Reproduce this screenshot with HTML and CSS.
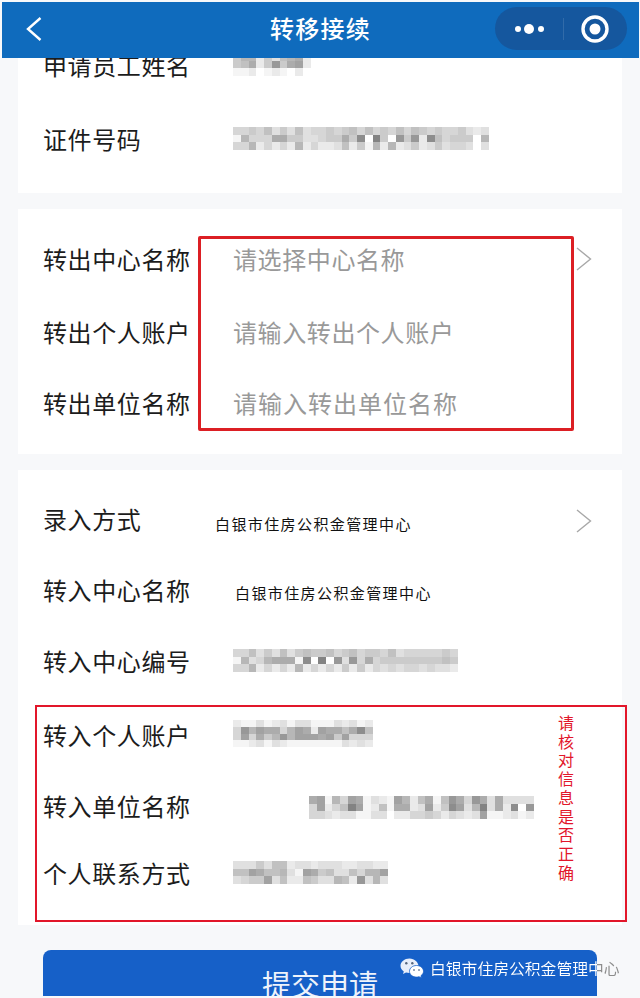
FILE: index.html
```html
<!DOCTYPE html>
<html>
<head>
    <meta charset="utf-8">
    <title>转移接续</title>
    <link rel="stylesheet" href="styles.css">
</head>
<body>
    <div class="page">
        <header class="topbar">
            <svg class="back" width="16" height="24" viewBox="0 0 16 24" fill="none" stroke="#fff" stroke-width="2.4">
                <polyline points="14.5 1 2 12 14.5 23"></polyline>
            </svg>
            <h1>转移接续</h1>
            <div class="capsule">
                <svg width="34" height="12" viewBox="0 0 34 12" fill="#fff">
                    <circle cx="6" cy="6" r="3"></circle>
                    <circle cx="17" cy="6" r="5"></circle>
                    <circle cx="29" cy="6" r="3"></circle>
                </svg>
                <span class="capsule-line"></span>
                <svg width="30" height="30" viewBox="0 0 30 30" fill="none" stroke="#fff" stroke-width="3.4">
                    <circle cx="15" cy="15" r="12"></circle>
                    <circle cx="15" cy="15" r="5.5" fill="#fff" stroke="none"></circle>
                </svg>
            </div>
        </header>

        <main class="content">
            <section class="card card-first">
                <div class="row">
                    <span class="label">申请员工姓名</span>
                    <div class="mosaic mosaic-name" data-rows="a88dac987d|a97da5a76d|eedfedefdf"></div>
                </div>
                <div class="row gap-wide">
                    <span class="label">证件号码</span>
                    <div class="mosaic" data-rows="bbab9cac9cbbaba9b9bab9b9ababbacdc|e8bbb77aaccbaa7a4f3af5a5d49baaaf8|bb8dbdbd8dbddc9dae8d8dcadcacbbcfc"></div>
                </div>
            </section>

            <section class="card card-out">
                <div class="row">
                    <span class="label">转出中心名称</span>
                    <span class="placeholder">请选择中心名称</span>
                    <svg class="chevron" width="16" height="24" viewBox="0 0 16 24" fill="none" stroke="#a8a8a8" stroke-width="1.4">
                        <polyline points="1 1 14.5 12 1 23"></polyline>
                    </svg>
                </div>
                <div class="row gap-small">
                    <span class="label">转出个人账户</span>
                    <span class="placeholder">请输入转出个人账户</span>
                </div>
                <div class="row">
                    <span class="label">转出单位名称</span>
                    <span class="placeholder placeholder-wide">请输入转出单位名称</span>
                </div>
            </section>

            <section class="card card-in">
                <div class="row">
                    <span class="label">录入方式</span>
                    <span class="pasted pasted-first">白银市住房公积金管理中心</span>
                    <svg class="chevron chevron-low" width="16" height="24" viewBox="0 0 16 24" fill="none" stroke="#a8a8a8" stroke-width="1.4">
                        <polyline points="1 1 14.5 12 1 23"></polyline>
                    </svg>
                </div>
                <div class="row">
                    <span class="label">转入中心名称</span>
                    <span class="pasted pasted-second">白银市住房公积金管理中心</span>
                </div>
                <div class="row">
                    <span class="label">转入中心编号</span>
                    <div class="mosaic" data-rows="bb9cac9ca9aa9ba9baab9cbbbbbab|e8cb8777e4f3f5c5b7baaaaaaaa9a|bb8dbdbd8dbdbdadadbcbcbbcbccd"></div>
                </div>
                <div class="row gap-wide">
                    <span class="label">转入个人账户</span>
                    <div class="mosaic mosaic-thin" data-rows="deecedcecceeecdced|b58677b867d6779749|b6b7a85866676a6bbb|eedcecdeeeeeeecdcd"></div>
                </div>
                <div class="row">
                    <span class="label">转入单位名称</span>
                    <div class="mosaic mosaic-unit" data-rows="76e8b67ecde68d97e957b57c7cccc|b6db936ed9e77dc6da46c83c7d4f5|bbcdcceeccfddbbabdbcdc6eedced"></div>
                </div>
                <div class="row gap-narrow">
                    <span class="label">个人联系方式</span>
                    <div class="mosaic" data-rows="cccac99dccdcccddccdd|9967998ce67a9cc9b886|cbaa6c9dd9acc89d5c8c"></div>
                </div>
            </section>

            <button class="submit" type="button">提交申请</button>
        </main>

        <div class="mark mark-out"></div>
        <div class="mark mark-in">
            <span class="tip">请核对信息是否正确</span>
        </div>

        <div class="source">
            <svg width="24" height="21" viewBox="0 0 24 21">
                <path d="M9.500 0.500C4.500 0.500 0.500 3.800 0.500 7.800c0 2.300 1.300 4.300 3.300 5.700l-0.800 2.500 3-1.500c1.100 0.300 2.200 0.500 3.500 0.500 5 0 9-3.200 9-6.700 0-4-4-7.800-9-7.800z" fill="#e8eefa"></path>
                <path d="M16.500 7.500c-4 0-7 2.600-7 5.800s3 5.800 7 5.800c0.900 0 1.700-0.100 2.500-0.400l2.500 1.300-0.600-2.200c1.600-1.100 2.600-2.700 2.600-4.500 0-3.200-3-5.800-7-5.800z" fill="#fff" stroke="#1660c8" stroke-width="0.800"></path>
                <circle cx="6.300" cy="5.300" r="1.200" fill="#56667c"></circle>
                <circle cx="12.300" cy="5.300" r="1.200" fill="#56667c"></circle>
                <circle cx="14" cy="12" r="1" fill="#7b8da6"></circle>
                <circle cx="19" cy="12" r="1" fill="#7b8da6"></circle>
            </svg>
            <span class="source-name">白银市住房公积金管理中心</span>
        </div>
    </div>

    <script src="mosaic.js"></script>
</body>
</html>
```

FILE: styles.css
```css
:root {
    --background: #f7f8fa;
    --bar: #0f6bbd;
    --bar-dark: #15579e;
    --button: #1660c8;
    --text: #1c1c1c;
    --muted: #999999;
    --red: #dc1f24;
}

* {
    margin: 0;
    padding: 0;
    box-sizing: border-box;
}

body {
    font-family: "Noto Sans CJK SC", "Liberation Sans", sans-serif;
    color: var(--text);
    background: var(--background);
}

.page {
    position: relative;
    height: 998px;
    overflow: hidden;
    background: var(--background);
}

/* top bar sits over the scrolled form */
.topbar {
    position: absolute;
    top: 2px;
    left: 2px;
    right: 1px;
    z-index: 2;
    height: 56px;
    padding-bottom: 3px;
    display: grid;
    grid-template-columns: minmax(0, 1fr) auto minmax(0, 1fr);
    align-items: center;
    background: var(--bar);
}

.topbar h1 {
    margin-bottom: 3px;
    font-size: 24px;
    font-weight: 500;
    letter-spacing: 1.2px;
    color: #fff;
}

.back {
    display: block;
    margin-left: 24px;
}

.capsule {
    justify-self: end;
    width: 132px;
    height: 43px;
    margin-right: 12px;
    padding: 0 17px;
    display: flex;
    align-items: center;
    justify-content: space-between;
    border-radius: 22px;
    background: var(--bar-dark);
}

.capsule-line {
    width: 1px;
    height: 22px;
    background: rgba(255, 255, 255, 0.12);
}

.content {
    padding: 13px 18px 0;
    display: flex;
    flex-direction: column;
    gap: 16px;
}

.card {
    padding: 16px 30px 14px 26px;
    background: #fff;
}

.card-first {
    padding-bottom: 19px;
}

.card-out {
    padding-top: 14px;
    padding-bottom: 16px;
}

.card-in {
    padding-top: 13px;
    padding-bottom: 17px;
}

.row {
    height: 71px;
    display: flex;
    align-items: center;
}

.gap-wide {
    margin-top: 3px;
}

.gap-small {
    margin-top: 2px;
}

.gap-narrow {
    margin-top: -4px;
}

.label {
    flex: none;
    width: 189px;
    margin-left: -1px;
    margin-right: 1px;
    font-size: 24px;
    letter-spacing: 0.6px;
    line-height: 1;
}

.placeholder {
    font-size: 24px;
    letter-spacing: 0.6px;
    line-height: 1;
    color: var(--muted);
}

.placeholder-wide {
    letter-spacing: 1px;
}

.chevron {
    margin-left: auto;
}

.chevron-low {
    margin-top: 5px;
}

.pasted {
    font-size: 15px;
    letter-spacing: 1.4px;
    line-height: 1;
    white-space: nowrap;
    color: #111;
}

.pasted-first {
    margin: 10px 0 0 -18px;
}

.pasted-second {
    margin: 6px 0 0 2px;
}

.mosaic {
    filter: blur(0.6px);
}

.mosaic-thin {
    margin-top: -2px;
}

.mosaic-unit {
    margin: 4px 0 0 76px;
}

.mosaic-row {
    display: flex;
    height: 7.6px;
}

.mosaic-thin .mosaic-row {
    height: 6.8px;
}

.mosaic-cell {
    flex: none;
    width: 7.75px;
}

.submit {
    display: block;
    width: 554px;
    height: 46px;
    margin: 9px 0 0 25px;
    overflow: hidden;
    border: none;
    border-radius: 8px 8px 0 0;
    background: var(--button);
    color: #eef3fb;
    font-family: inherit;
    font-size: 29px;
    line-height: 66px;
}

/* red marks drawn on top of the screenshot */
.mark {
    position: absolute;
    z-index: 1;
    pointer-events: none;
}

.mark-out {
    left: 198px;
    top: 236px;
    width: 376px;
    height: 195px;
    border: 3px solid var(--red);
    border-radius: 2px;
}

.mark-in {
    left: 35px;
    top: 705px;
    width: 592px;
    height: 217px;
    border: 2.5px solid #e2162a;
}

.tip {
    position: absolute;
    left: 521px;
    top: 8px;
    writing-mode: vertical-rl;
    font-size: 16px;
    letter-spacing: 2.7px;
    line-height: 1;
    color: #e2162a;
}

.source {
    position: absolute;
    left: 400px;
    top: 958px;
    z-index: 1;
    display: flex;
    align-items: center;
    gap: 6px;
}

.source-name {
    font-size: 15.8px;
    line-height: 1;
    white-space: nowrap;
    color: transparent;
    background: linear-gradient(to right, #fff 167px, #8c8c8c 167px);
    -webkit-background-clip: text;
    background-clip: text;
}
```

FILE: mosaic.js
```js
// digits are grey levels: 0 dark, f white
document.querySelectorAll('.mosaic').forEach((box) => {
    box.dataset.rows.split('|').forEach((row) => {
        const line = document.createElement('div');
        line.className = 'mosaic-row';
        for (const ch of row) {
            const cell = document.createElement('span');
            const grey = 100 + Math.round(parseInt(ch, 16) * 10.33);
            cell.className = 'mosaic-cell';
            cell.style.background = `rgb(${grey}, ${grey}, ${grey})`;
            line.appendChild(cell);
        }
        box.appendChild(line);
    });
});
```
